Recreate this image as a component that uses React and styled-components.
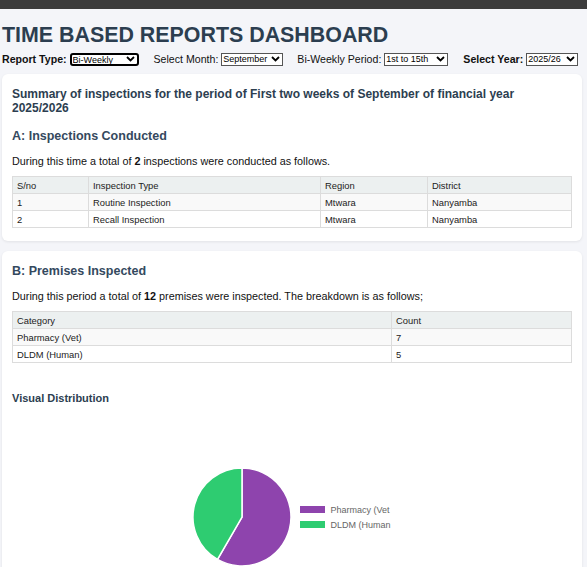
import React from "react";
import styled, { createGlobalStyle } from "styled-components";

const Global = createGlobalStyle`
  html, body { margin: 0; padding: 0; }
  body {
    background: #f4f5f9;
    font-family: "Liberation Sans", Arial, sans-serif;
    color: #222;
  }
`;

const TopBar = styled.div`
  height: 9px;
  background: #3c3c3c;
`;

const Page = styled.div`
  padding: 0 5px 0 2px;
`;

const Title = styled.h1`
  margin: 13px 0 0;
  font-size: 21.4px;
  line-height: 27px;
  font-weight: 700;
  color: #2c3e50;
`;

const Controls = styled.div`
  display: flex;
  align-items: center;
  margin-top: 3px;
  height: 14px;
  font-size: 10.6px;
  white-space: nowrap;
`;

const Group = styled.label`
  display: flex;
  align-items: center;
  gap: 3px;
  margin-right: ${(p) => p.$gap}px;
  font-weight: ${(p) => (p.$bold ? 700 : 400)};
  color: #111;
`;

const SelectWrap = styled.span`
  position: relative;
  display: inline-flex;
  align-items: center;
  width: ${(p) => p.$w}px;
  height: 13px;
  box-sizing: border-box;
  border: ${(p) => (p.$focused ? "2px solid #000" : "1px solid #555")};
  border-radius: ${(p) => (p.$focused ? "3px" : "0")};
  background: #fff;
`;

const Select = styled.select`
  appearance: none;
  -webkit-appearance: none;
  border: none;
  outline: none;
  background: transparent;
  font-family: "Liberation Sans", Arial, sans-serif;
  font-size: 9px;
  font-weight: 400;
  color: #000;
  padding: 0 0 0 1px;
  margin: 0;
  width: 100%;
  height: 100%;
  line-height: 11px;
`;

const Chevron = styled.svg`
  position: absolute;
  right: 2px;
  top: 50%;
  transform: translateY(-50%);
  pointer-events: none;
`;

const Card = styled.section`
  background: #fff;
  border-radius: 6px;
  box-shadow: 0 1px 3px rgba(0, 0, 0, 0.08);
  padding: ${(p) => p.$pad};
  margin-top: ${(p) => p.$mt}px;
`;

const Summary = styled.h2`
  margin: 0;
  font-size: 12px;
  line-height: 14px;
  font-weight: 700;
  color: #2c3e50;
`;

const SectionHead = styled.h3`
  margin: ${(p) => p.$m};
  font-size: 12.5px;
  line-height: 16px;
  font-weight: 700;
  color: #34495e;
`;

const Para = styled.p`
  margin: ${(p) => p.$m};
  font-size: 10.8px;
  line-height: 14px;
  color: #111;
`;

const Table = styled.table`
  width: 100%;
  table-layout: fixed;
  border-collapse: collapse;
  font-size: 9.4px;
  color: #222;
  margin-top: ${(p) => p.$mt}px;
`;

const Th = styled.th`
  background: #ecf0f0;
  border: 1px solid #dcdcdc;
  text-align: left;
  font-weight: 400;
  padding: 0 4px;
  height: 16px;
  width: ${(p) => p.$w || "auto"};
`;

const Td = styled.td`
  border: 1px solid #dcdcdc;
  padding: 0 4px;
  height: 16px;
`;

const Tr = styled.tr`
  background: ${(p) => (p.$alt ? "#f9f9f9" : "#fff")};
`;

const SubHead = styled.h4`
  margin: 28px 0 0;
  font-size: 11px;
  line-height: 14px;
  font-weight: 700;
  color: #2c3e50;
`;

const ChartArea = styled.div`
  display: flex;
  justify-content: center;
  align-items: center;
  gap: 8px;
  margin-top: 62px;
`;

const Legend = styled.div`
  display: flex;
  flex-direction: column;
  gap: 7px;
  width: 93px;
`;

const LegendItem = styled.div`
  display: flex;
  align-items: center;
  gap: 6px;
  font-size: 9px;
  color: #666;
  line-height: 8px;
`;

const Swatch = styled.span`
  width: 25px;
  height: 7px;
  background: ${(p) => p.$c};
`;

function Sel({ w, value, focused }) {
  return (
    <SelectWrap $w={w} $focused={focused}>
      <Select defaultValue={value}>
        <option>{value}</option>
      </Select>
      <Chevron width="9" height="6" viewBox="0 0 9 6">
        <path d="M1 1 L4.5 4.5 L8 1" stroke="#000" strokeWidth="1.8" fill="none" />
      </Chevron>
    </SelectWrap>
  );
}

function Pie({ data }) {
  const r = 49;
  const c = 50;
  const total = data.reduce((s, d) => s + d.v, 0);
  let a = -Math.PI / 2;
  return (
    <svg width="100" height="100" viewBox="0 0 100 100">
      {data.map((d) => {
        const a2 = a + (d.v / total) * Math.PI * 2;
        const x1 = c + r * Math.cos(a);
        const y1 = c + r * Math.sin(a);
        const x2 = c + r * Math.cos(a2);
        const y2 = c + r * Math.sin(a2);
        const large = a2 - a > Math.PI ? 1 : 0;
        const path = `M${c} ${c} L${x1} ${y1} A${r} ${r} 0 ${large} 1 ${x2} ${y2} Z`;
        a = a2;
        return <path key={d.k} d={path} fill={d.c} stroke="#fff" strokeWidth="1.5" />;
      })}
    </svg>
  );
}

const inspections = [
  ["1", "Routine Inspection", "Mtwara", "Nanyamba"],
  ["2", "Recall Inspection", "Mtwara", "Nanyamba"],
];

const premises = [
  ["Pharmacy (Vet)", "7"],
  ["DLDM (Human)", "5"],
];

const pieData = [
  { k: "Pharmacy (Vet", v: 7, c: "#8e44ad" },
  { k: "DLDM (Human", v: 5, c: "#2ecc71" },
];

export default function App() {
  return (
    <>
      <Global />
      <TopBar />
      <Page>
        <Title>TIME BASED REPORTS DASHBOARD</Title>
        <Controls>
          <Group $bold $gap={15}>
            Report Type:
            <Sel w={69} value="Bi-Weekly" focused />
          </Group>
          <Group $gap={14}>
            Select Month:
            <Sel w={62} value="September" />
          </Group>
          <Group $gap={15}>
            Bi-Weekly Period:
            <Sel w={64} value="1st to 15th" />
          </Group>
          <Group $bold $gap={0}>
            Select Year:
            <Sel w={52} value="2025/26" />
          </Group>
        </Controls>

        <Card $mt={8} $pad="13px 10px 13px">
          <Summary>
            Summary of inspections for the period of First two weeks of September of financial year
            2025/2026
          </Summary>
          <SectionHead $m="13px 0 0">A: Inspections Conducted</SectionHead>
          <Para $m="10px 0 0">
            During this time a total of <b>2</b> inspections were conducted as follows.
          </Para>
          <Table $mt={8}>
            <thead>
              <tr>
                <Th $w="67px">S/no</Th>
                <Th $w="223px">Inspection Type</Th>
                <Th $w="98px">Region</Th>
                <Th>District</Th>
              </tr>
            </thead>
            <tbody>
              {inspections.map((r, i) => (
                <Tr key={r[0]} $alt={i === 0}>
                  {r.map((c, j) => (
                    <Td key={j}>{c}</Td>
                  ))}
                </Tr>
              ))}
            </tbody>
          </Table>
        </Card>

        <Card $mt={10} $pad="12px 10px 10px">
          <SectionHead $m="0">B: Premises Inspected</SectionHead>
          <Para $m="10px 0 0">
            During this period a total of <b>12</b> premises were inspected. The breakdown is as
            follows;
          </Para>
          <Table $mt={8}>
            <thead>
              <tr>
                <Th $w="370px">Category</Th>
                <Th>Count</Th>
              </tr>
            </thead>
            <tbody>
              {premises.map((r, i) => (
                <Tr key={r[0]} $alt={i === 0}>
                  <Td>{r[0]}</Td>
                  <Td>{r[1]}</Td>
                </Tr>
              ))}
            </tbody>
          </Table>
          <SubHead>Visual Distribution</SubHead>
          <ChartArea>
            <Pie data={pieData} />
            <Legend>
              {pieData.map((d) => (
                <LegendItem key={d.k}>
                  <Swatch $c={d.c} />
                  {d.k}
                </LegendItem>
              ))}
            </Legend>
          </ChartArea>
        </Card>
      </Page>
    </>
  );
}
